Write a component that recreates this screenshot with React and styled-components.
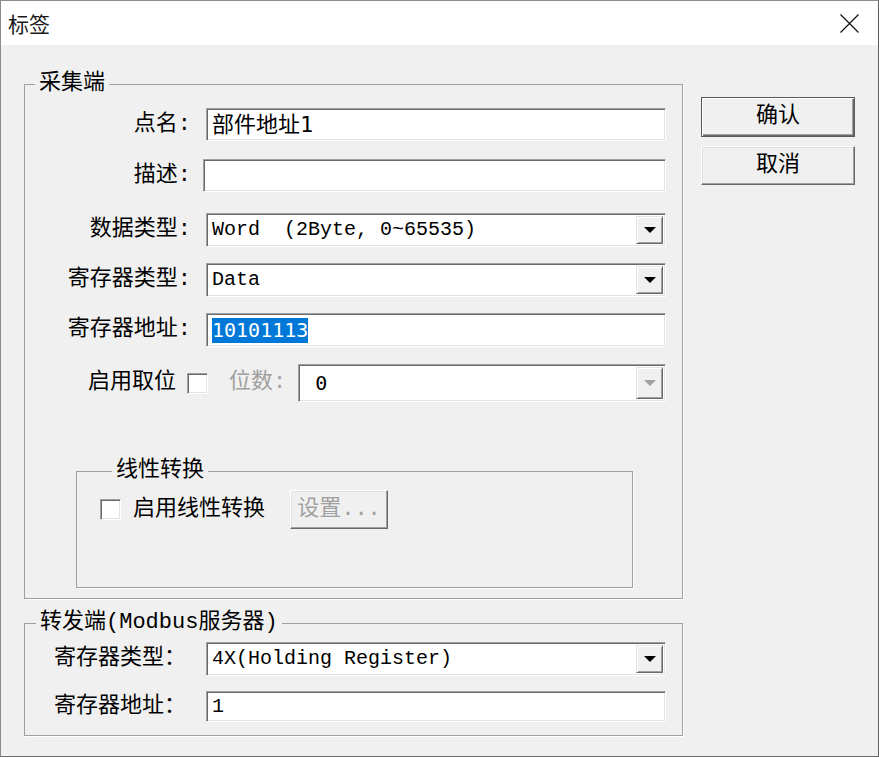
import React from "react";
import styled, { createGlobalStyle, css } from "styled-components";

const MONO = `"Liberation Mono", "Noto Sans CJK SC", monospace`;
const SANS_MONO = `"DejaVu Sans Mono", "Noto Sans CJK SC", monospace`;

const GlobalStyle = createGlobalStyle`
  html, body { margin: 0; padding: 0; background: #fff; }
  body { font-family: ${MONO}; }
`;

const sunken = css`
  box-sizing: border-box;
  background: #fff;
  border: 1px solid;
  border-color: #a0a0a0 #fff #fff #a0a0a0;
  box-shadow: inset 1px 1px 0 #696969, inset -1px -1px 0 #e3e3e3;
`;

const Window = styled.div`
  width: 879px;
  height: 757px;
  box-sizing: border-box;
  border: 1px solid #8c8c8c;
  border-right-color: #5c5c5c;
  border-bottom-color: #6e6e6e;
  display: flex;
  flex-direction: column;
  background: #f0f0f0;
  font-family: ${MONO};
  font-size: 22px;
  line-height: 22px;
  color: #000;
`;

const TitleBar = styled.div`
  height: 44px;
  flex-shrink: 0;
  background: #fff;
  display: flex;
  align-items: center;
  justify-content: space-between;
  padding: 0 19px 0 7px;
`;

const Caption = styled.span`
  font-family: "Noto Sans CJK SC", sans-serif;
  font-size: 21px;
  color: #1a1a1a;
`;

const Body = styled.div`
  flex: 1;
  display: flex;
  gap: 18px;
  padding: 28px 0 0 23px;
`;

const Main = styled.div`
  width: 659px;
  display: flex;
  flex-direction: column;
`;

const Side = styled.div`
  width: 154px;
  padding-top: 24px;
  display: flex;
  flex-direction: column;
  gap: 9px;
`;

const Group = styled.fieldset`
  margin: ${p => p.$margin || "0"};
  min-width: 0;
  padding: ${p => p.$pad};
  border: 1px solid #a0a0a0;
  box-shadow: 1px 1px 0 #fff;
  display: flex;
  flex-direction: column;
`;

const Legend = styled.legend`
  margin-left: ${p => p.$indent || 10}px;
  padding: 0 4px;
  font-size: 22px;
  line-height: 22px;
  white-space: nowrap;
`;

const Row = styled.div`
  display: flex;
  align-items: center;
  height: ${p => p.$h || 34}px;
  margin-top: ${p => p.$mt || 0}px;
`;

const Label = styled.div`
  width: ${p => p.$w || 166}px;
  box-sizing: border-box;
  flex-shrink: 0;
  text-align: ${p => (p.$left ? "left" : "right")};
  padding-left: ${p => (p.$left ? 29 : 0)}px;
  margin-right: ${p => p.$gap ?? 15}px;
  white-space: nowrap;
`;

const DimLabel = styled.span`
  color: #a0a0a0;
  margin: 0 12px 0 21px;
  white-space: nowrap;
`;

const TextBox = styled.div`
  ${sunken};
  flex: 1;
  align-self: stretch;
  display: flex;
  align-items: center;
  padding-left: 5px;
  font-family: ${p => (p.$sans ? SANS_MONO : MONO)};
  font-size: ${p => p.$size || 20}px;
  white-space: pre;
`;

const Selected = styled.span`
  background: #0078d7;
  color: #fff;
  padding: 1px 0 2px;
`;

const Combo = styled.div`
  ${sunken};
  flex: 1;
  align-self: stretch;
  display: flex;
  padding: 2px;
`;

const ComboText = styled.div`
  flex: 1;
  display: flex;
  align-items: center;
  padding-left: ${p => p.$indent || 3}px;
  font-family: ${p => (p.$sans ? SANS_MONO : MONO)};
  font-size: 20px;
  white-space: pre;
`;

const DropButton = styled.div`
  width: 27px;
  box-sizing: border-box;
  background: #f0f0f0;
  border: 1px solid;
  border-color: #e3e3e3 #696969 #696969 #e3e3e3;
  box-shadow: inset 1px 1px 0 #fff, inset -1px -1px 0 #a0a0a0;
  display: flex;
  align-items: center;
  justify-content: center;
`;

const Arrow = styled.span`
  width: 0;
  height: 0;
  border-left: 6px solid transparent;
  border-right: 6px solid transparent;
  border-top: 6px solid ${p => (p.$disabled ? "#a0a0a0" : "#000")};
`;

const CheckBox = styled.span`
  ${sunken};
  width: 21px;
  height: 21px;
  flex-shrink: 0;
  margin-left: ${p => p.$ml || 0}px;
`;

const CheckLabel = styled.span`
  margin-left: 12px;
  white-space: nowrap;
`;

const PushButton = styled.button`
  width: ${p => p.$w || 154}px;
  height: ${p => p.$h}px;
  margin-left: ${p => p.$ml || 0}px;
  padding: 0;
  flex-shrink: 0;
  font-family: ${MONO};
  font-size: 22px;
  line-height: 22px;
  color: ${p => (p.disabled ? "#a0a0a0" : "#000")};
  background: #f0f0f0;
  border: 1px solid;
  border-color: #fff #696969 #696969 #fff;
  box-shadow: inset -1px -1px 0 #a0a0a0, inset 1px 1px 0 #e3e3e3;
  ${p =>
    p.$default &&
    css`
      border-color: #5a5a5a;
      box-shadow: inset 1px 1px 0 #fff, inset -1px -1px 0 #696969,
        inset -2px -2px 0 #a0a0a0;
    `}
`;

const CloseIcon = () => (
  <svg width="19" height="19" viewBox="0 0 19 19">
    <path d="M0.5 0.5 L18.5 18.5 M18.5 0.5 L0.5 18.5" stroke="#111" strokeWidth="1.2" fill="none" />
  </svg>
);

const ComboBox = ({ value, sans, disabled, indent }) => (
  <Combo>
    <ComboText $sans={sans} $indent={indent}>{value}</ComboText>
    <DropButton>
      <Arrow $disabled={disabled} />
    </DropButton>
  </Combo>
);

export default function App() {
  return (
    <>
      <GlobalStyle />
      <Window>
        <TitleBar>
          <Caption>标签</Caption>
          <CloseIcon />
        </TitleBar>
        <Body>
          <Main>
            <Group $pad="13px 16px 10px 0">
              <Legend>采集端</Legend>
              <Row $h={33}>
                <Label>点名:</Label>
                <TextBox $sans $size={22}>部件地址1</TextBox>
              </Row>
              <Row $h={33} $mt={18}>
                <Label $gap={12}>描述:</Label>
                <TextBox />
              </Row>
              <Row $mt={21}>
                <Label>数据类型:</Label>
                <ComboBox value="Word  (2Byte, 0~65535)" />
              </Row>
              <Row $mt={16}>
                <Label>寄存器类型:</Label>
                <ComboBox value="Data" />
              </Row>
              <Row $mt={16}>
                <Label>寄存器地址:</Label>
                <TextBox $sans>
                  <Selected>10101113</Selected>
                </TextBox>
              </Row>
              <Row $h={38} $mt={17}>
                <Label $w={151} $gap={11}>启用取位</Label>
                <CheckBox />
                <DimLabel>位数:</DimLabel>
                <ComboBox value="0" sans disabled indent={14} />
              </Row>
              <Group $margin="58px 33px 0 51px" $pad="8px 0 58px 23px">
                <Legend $indent={12}>线性转换</Legend>
                <Row $h={39}>
                  <CheckBox />
                  <CheckLabel>启用线性转换</CheckLabel>
                  <PushButton $w={98} $h={39} $ml={25} disabled>
                    设置...
                  </PushButton>
                </Row>
              </Group>
            </Group>
            <Group $margin="13px 0 0" $pad="8px 16px 13px 0">
              <Legend $indent={11}>转发端(Modbus服务器)</Legend>
              <Row>
                <Label $left>寄存器类型：</Label>
                <ComboBox value="4X(Holding Register)" />
              </Row>
              <Row $h={31} $mt={15}>
                <Label $left>寄存器地址：</Label>
                <TextBox>1</TextBox>
              </Row>
            </Group>
          </Main>
          <Side>
            <PushButton $h={40} $default>确认</PushButton>
            <PushButton $h={39}>取消</PushButton>
          </Side>
        </Body>
      </Window>
    </>
  );
}
